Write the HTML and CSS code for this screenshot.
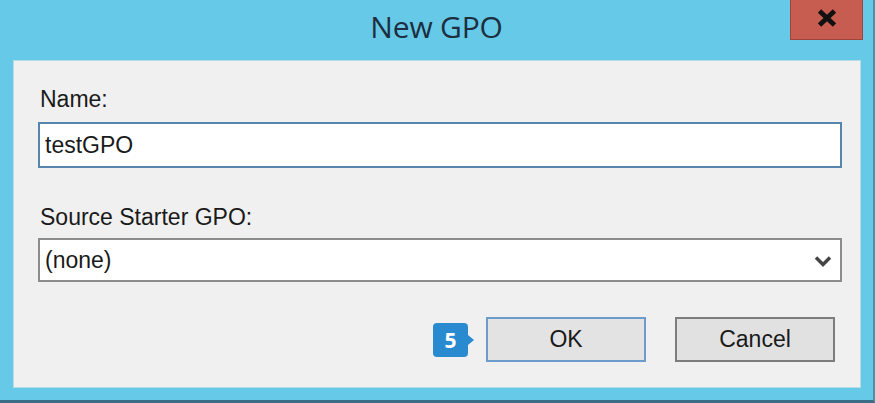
FILE: index.html
```html
<!DOCTYPE html>
<html>
<head>
<meta charset="utf-8">
<link rel="stylesheet" href="styles.css">
</head>
<body>
<div class="window">
  <div class="titlebar">
    <div class="title">New GPO</div>
    <div class="close">
      <svg width="20" height="18" viewBox="0 0 20 18"><path d="M2.5 2 L17.5 16 M17.5 2 L2.5 16" stroke="#111" stroke-width="4.8" stroke-linecap="butt"/></svg>
    </div>
  </div>
  <div class="panel">
    <div class="label">Name:</div>
    <div class="field focused">testGPO</div>
    <div class="label second">Source Starter GPO:</div>
    <div class="field select">
      <span>(none)</span>
      <svg class="chev" width="18" height="12" viewBox="0 0 18 12"><path d="M2 2.5 L9 9.5 L16 2.5" fill="none" stroke="#444" stroke-width="3.4"/></svg>
    </div>
    <div class="actions">
      <div class="badge">5</div>
      <div class="btn ok">OK</div>
      <div class="btn">Cancel</div>
    </div>
  </div>
</div>
</body>
</html>
```
FILE: styles.css
```css
html, body {
  margin: 0;
  padding: 0;
}
body {
  width: 875px;
  height: 403px;
  overflow: hidden;
  font-family: "Liberation Sans", Arial, sans-serif;
}
.window {
  width: 875px;
  height: 403px;
  box-sizing: border-box;
  background: #66c9e8;
  border-bottom: 3px solid #3b6e86;
  border-right: 2px solid #4a90ad;
  display: flex;
  flex-direction: column;
}
.titlebar {
  height: 61px;
  flex: none;
  display: grid;
  grid-template-columns: 1fr auto 1fr;
  align-items: start;
}
.title {
  grid-column: 2;
  font-family: "Open Sans", "Liberation Sans", sans-serif;
  font-size: 30px;
  color: #1d2f3f;
  margin-top: 6px;
  letter-spacing: -0.2px;
}
.close {
  grid-column: 3;
  justify-self: end;
  margin-right: 10px;
  width: 73px;
  height: 40px;
  box-sizing: border-box;
  background: #c75c50;
  border: 1px solid #9e463c;
  border-top: none;
  display: flex;
  align-items: center;
  justify-content: center;
  padding-bottom: 4px;
  margin-left: 8px;
}
.panel {
  margin: 0 13px 0 14px;
  height: 326px;
  flex: none;
  background: #f0f0f0;
  box-shadow: 0 0 0 1px #b8dbe6;
  box-sizing: border-box;
  padding: 25px 18px 0 24px;
  display: flex;
  flex-direction: column;
  color: #1a1a1a;
  font-size: 23px;
}
.label {
  padding-left: 2px;
  line-height: 26px;
  height: 26px;
  margin-bottom: 10px;
}
.label.second {
  margin-top: 36px;
  margin-bottom: 8px;
}
.field {
  height: 46px;
  box-sizing: border-box;
  background: #fff;
  border: 2px solid #8a8a8a;
  display: flex;
  align-items: center;
  padding-left: 5px;
}
.field.focused {
  border-color: #5785ad;
}
.field.select {
  height: 44px;
  justify-content: space-between;
  padding-right: 8px;
  border-color: #8c8c8c;
}
.chev {
  margin-top: 2px;
}
.actions {
  margin-top: 35px;
  display: flex;
  justify-content: flex-end;
  align-items: center;
  padding-right: 7px;
  gap: 29px;
}
.badge {
  position: relative;
  width: 35px;
  height: 34px;
  margin-right: -11px;
  box-sizing: border-box;
  border-radius: 4px;
  background: #2a8ad0;
  color: #fff;
  font-weight: bold;
  font-family: "Open Sans", "Liberation Sans", sans-serif;
  font-size: 21px;
  display: flex;
  align-items: center;
  justify-content: center;
}
.badge::after {
  content: "";
  position: absolute;
  right: -6px;
  top: 12px;
  border-left: 6px solid #2a8ad0;
  border-top: 5px solid transparent;
  border-bottom: 5px solid transparent;
}
.btn {
  width: 160px;
  height: 45px;
  box-sizing: border-box;
  background: #e1e1e1;
  border: 2px solid #7d7d7d;
  display: flex;
  align-items: center;
  justify-content: center;
}
.btn.ok {
  border-color: #6b9ccb;
  background: #e3e3e3;
}
```
